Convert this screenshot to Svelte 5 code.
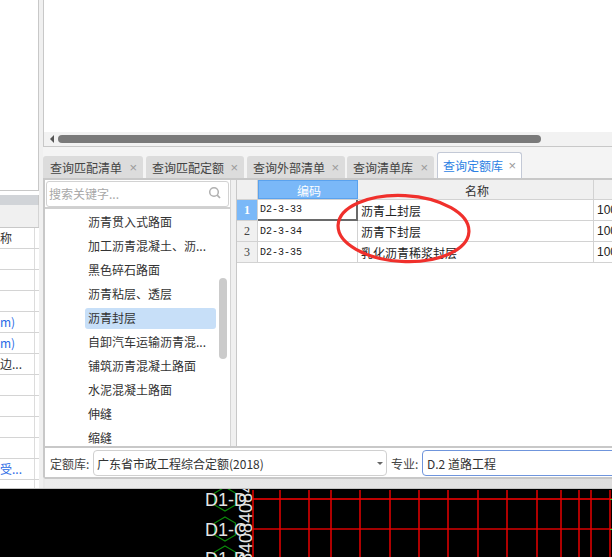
<script>
  const tabs = [
    { label: '查询匹配清单', w: 100, ml: 0 },
    { label: '查询匹配定额', w: 98, ml: 3 },
    { label: '查询外部清单', w: 98, ml: 3 },
    { label: '查询清单库', w: 87, ml: 2 },
    { label: '查询定额库', w: 85, ml: 3, active: true }
  ];
  const tree = ['沥青贯入式路面', '加工沥青混凝土、沥...', '黑色碎石路面', '沥青粘层、透层', '沥青封层', '自卸汽车运输沥青混...', '铺筑沥青混凝土路面', '水泥混凝土路面', '伸缝', '缩缝'];
  const rows = [
    { n: 1, code: 'D2-3-33', name: '沥青上封层', active: true },
    { n: 2, code: 'D2-3-34', name: '沥青下封层' },
    { n: 3, code: 'D2-3-35', name: '乳化沥青稀浆封层' }
  ];
  const leftRows = [
    { t: '' }, { t: '' }, { t: '' },
    { t: 'm)', c: 'blue' }, { t: 'm)', c: 'blue' }, { t: '边...', c: '' },
    { t: '' }, { t: '' }, { t: '' }, { t: '' },
    { t: '受...', c: 'blue' }, { t: '' }
  ];
  const vx = [253, 280, 309, 331, 360, 390, 419, 448, 478, 507, 537, 561, 579, 591, 610];
  const hex = (cx, cy, r) =>
    [0, 1, 2, 3, 4, 5].map((i) => {
      const a = (Math.PI / 3) * i - Math.PI / 2;
      return `${(cx + r * Math.cos(a)).toFixed(1)},${(cy + r * Math.sin(a)).toFixed(1)}`;
    }).join(' ');
</script>

<div class="app">
  <div class="top">
    <div class="left">
      <div class="left-blank"></div>
      <div class="left-band"></div>
      <div class="left-sub"></div>
      <div class="left-head"><span class="clip">称</span></div>
      {#each leftRows as r}
        <div class="left-row"><span class="clip {r.c}">{r.t}</span></div>
      {/each}
    </div>
    <div class="gutter"></div>
    <div class="right">
      <div class="white-top"></div>
      <div class="hscroll">
        <span class="arrow"></span>
        <span class="thumb"></span>
      </div>
      <div class="tabs">
        {#each tabs as t}
          <div class="tab" class:active={t.active} style="width:{t.w}px;margin-left:{t.ml}px">
            <span>{t.label}</span><span class="x">×</span>
          </div>
        {/each}
      </div>
      <div class="body">
        <div class="main">
          <div class="tree">
            <div class="search">
              <span>搜索关键字...</span>
              <svg width="14" height="14" viewBox="0 0 14 14"><circle cx="6" cy="6" r="4.3" fill="none" stroke="#b0b0b0" stroke-width="1.5"/><path d="M9.2 9.2L12 12" stroke="#b0b0b0" stroke-width="1.7"/></svg>
            </div>
            <div class="list">
              {#each tree as item}
                <div class="item"><span class="label" class:sel={item === '沥青封层'}>{item}</span></div>
              {/each}
              <div class="vthumb"></div>
            </div>
          </div>
          <div class="sep"></div>
          <div class="grid">
            <div class="g-row head">
              <div class="c-n"></div>
              <div class="c-code selhead">编码</div>
              <div class="c-name center">名称</div>
              <div class="c-q"></div>
            </div>
            {#each rows as r}
              <div class="g-row">
                <div class="c-n num" class:selnum={r.active}>{r.n}</div>
                <div class="c-code code" class:cur={r.active}>{r.code}</div>
                <div class="c-name">{r.name}</div>
                <div class="c-q">100</div>
              </div>
            {/each}
          </div>
        </div>
        <div class="footer">
          <span class="flabel">定额库:</span>
          <div class="select"><span>广东省市政工程综合定额(2018)</span><i class="caret"></i></div>
          <span class="flabel second">专业:</span>
          <div class="input">D.2 道路工程</div>
        </div>
        <div class="strip"></div>
      </div>
    </div>
  </div>

  <svg class="cad" width="612" height="69" viewBox="0 488 612 69">
    <rect x="0" y="488" width="612" height="69" fill="#000"/>
    <path d="M253 498H612" stroke="#f00" stroke-width="1.6"/>
    <path d="M253 528H612" stroke="#d80000" stroke-width="1.6"/>
    {#each vx as x}
      <path d="M{x} 489V557" stroke="#e80000" stroke-width="1.5"/>
    {/each}
    <polygon points={hex(225, 498, 12)} fill="none" stroke="#0b8a0b" stroke-width="1.2"/>
    <polygon points={hex(225, 528, 12)} fill="none" stroke="#0b8a0b" stroke-width="1.2"/>
    <polygon points={hex(225, 557, 12)} fill="none" stroke="#0b8a0b" stroke-width="1.2"/>
    <text x="205" y="505" class="cadt">D1-D</text>
    <text x="205" y="535" class="cadt">D1-C</text>
    <text x="205" y="564" class="cadt">D1-B</text>
    <text transform="translate(252 562) rotate(-90)" class="cadt">84084084</text>
    <path d="M611 498v1M611 528v1" stroke="#3c3" stroke-width="2"/>
  </svg>

  <svg class="ring" width="612" height="300" viewBox="0 0 612 300">
    <ellipse cx="403.5" cy="228.5" rx="65.5" ry="33" transform="rotate(3 403.5 228.5)" fill="none" stroke="#f0302c" stroke-width="3.2"/>
  </svg>
</div>

<style>
  :global(body) { margin: 0; }
  .app {
    position: relative;
    width: 612px;
    height: 557px;
    overflow: hidden;
    display: flex;
    flex-direction: column;
    font-family: "Noto Sans CJK SC", "Liberation Sans", sans-serif;
    font-size: 12px;
    color: #333;
    background: #f0f0f0;
  }
  .top { display: flex; height: 488px; flex: none; border-bottom: 1px solid #c4c4c4; }
  .left { width: 39px; flex: none; display: flex; flex-direction: column; background: #fff; overflow: hidden; }
  .left-blank { height: 190px; flex: none; border-right: 1px solid #c8c8c8; border-bottom: 1px solid #c8c8c8; box-sizing: content-box; width: 38px; }
  .left-band { margin-top: 4px; height: 10px; flex: none; background: #d1d4d8; border-right: 1px solid #c8c8c8; }
  .left-sub { height: 22px; flex: none; background: #f0f0f0; border-right: 1px solid #d4d4d4; }
  .left-head, .left-row { flex: none; height: 21px; box-sizing: border-box; border-top: 1px solid #d4d4d4; display: flex; justify-content: flex-start; padding-right: 3px; background: #fff; }
  .left-head { border-top-color: #c8c8c8; background: #fff; }
  .clip { width: 35px; height: 100%; box-sizing: border-box; border-right: 1px solid #dcdcdc; display: flex; align-items: center; white-space: nowrap; overflow: hidden; line-height: 1; }
  .blue { color: #2a6be6; }
  .gutter { width: 4px; flex: none; background: #f0f0f0; }
  .right { flex: 1; min-width: 0; display: flex; flex-direction: column; }
  .white-top { height: 132px; flex: none; background: #fff; border-left: 1px solid #c8c8c8; }
  .hscroll { height: 14px; flex: none; background: #f2f2f2; border-left: 1px solid #c8c8c8; border-bottom: 1px solid #c8c8c8; display: flex; align-items: center; padding-left: 6px; }
  .arrow { width: 0; height: 0; border-style: solid; border-width: 4px 4px 4px 0; border-color: transparent #555 transparent transparent; }
  .thumb { margin-left: 4px; width: 483px; height: 8px; border-radius: 4px; background: #7a7a7a; }
  .tabs { height: 31px; flex: none; display: flex; align-items: flex-end; background: #f4f4f4; }
  .tab { height: 22px; box-sizing: border-box; flex: none; background: #dcdcdc; border-radius: 3px 3px 0 0; padding: 0 6px 0 6px; display: flex; align-items: center; justify-content: space-between; color: #444; white-space: nowrap; }
  .tab:first-child { padding-left: 7px; }
  .tab.active { height: 26px; background: #fff; color: #2c7fe3; border: 1px solid #c3c9d6; border-bottom: none; padding: 0 5px 0 5px; }
  .x { color: #9a9a9a; font-size: 13px; font-family: "Liberation Sans", sans-serif; }
  .body { flex: 1; min-height: 0; display: flex; flex-direction: column; background: #fff; border-top: 2px solid #c8c8c8; }
  .main { height: 266px; flex: none; display: flex; }
  .tree { width: 188px; flex: none; display: flex; flex-direction: column; border-left: 2px solid #c8c8c8; border-right: 1px solid #d4d4d4; box-sizing: border-box; }
  .search { height: 26px; flex: none; box-sizing: border-box; margin: 1px 1px 0; border: 1px solid #d2d2d2; border-radius: 3px; display: flex; align-items: center; justify-content: space-between; padding: 0 6px 2px 2px; color: #a8a8a8; }
  .list { position: relative; flex: 1; min-height: 0; border-top: 2px solid #d0d0d0; padding-top: 1px; overflow: hidden; }
  .item { height: 24px; display: flex; align-items: center; padding-left: 40px; }
  .label { display: flex; align-items: center; box-sizing: border-box; width: 131px; height: 21px; padding: 0 0 2px 3px; border-radius: 3px; white-space: nowrap; }
  .label.sel { background: #c7dff8; }
  .vthumb { position: absolute; left: 174px; top: 69px; width: 8px; height: 81px; background: #cbcbcb; border-radius: 4px; }
  .sep { width: 5px; flex: none; background: #f0f0f0; border-right: 1px solid #c8c8c8; }
  .grid { flex: 1; min-width: 0; background: #fff; overflow: hidden; }
  .g-row { display: flex; height: 21px; box-sizing: border-box; border-bottom: 1px solid #d2d2d2; color: #222; }
  .g-row.head { height: 20px; background: #f0f0f0; border-bottom-color: #d2d2d2; color: #333; }
  .g-row > div { flex: none; box-sizing: border-box; border-right: 1px solid #d2d2d2; display: flex; align-items: center; white-space: nowrap; }
  .g-row.head > div { padding-top: 1px; }
  .g-row > .c-n { width: 21px; justify-content: center; background: #f0f0f0; }
  .num { font-family: "Liberation Serif", serif; color: #444; }
  .g-row > .selnum { background: #7ab8f8; color: #fff; font-weight: bold; }
  .g-row > .c-code { width: 100px; padding-left: 2px; }
  .code { font-family: "Liberation Mono", monospace; font-size: 10px; }
  .g-row > .selhead { justify-content: center; background: #7ab8f8; color: #fff; border: 1px solid #5aa2ee; }
  .g-row > .cur { border-right: 2px solid #6a6a6a; border-bottom: 2px solid #6a6a6a; height: 21px; }
  .g-row > .c-name { width: 236px; padding-left: 3px; }
  .g-row > .center { justify-content: center; }
  .g-row > .c-q { width: 100px; padding-left: 3px; font-family: "Liberation Sans", sans-serif; border-right: none; }
  .footer { height: 31px; flex: none; box-sizing: border-box; display: flex; align-items: center; padding: 2px 0 1px 5px; border-top: 2px solid #c8c8c8; border-left: 2px solid #c8c8c8; background: #fff; }
  .flabel { flex: none; width: 40px; color: #444; white-space: nowrap; }
  .second { margin-left: 4px; width: 30px; }
  .select { width: 294px; flex: none; height: 26px; box-sizing: border-box; margin-left: 3px; border: 1px solid #d0d0d0; border-radius: 4px; display: flex; align-items: center; justify-content: space-between; padding: 0 3px; color: #333; }
  .caret { width: 0; height: 0; border-style: solid; border-width: 3px 3px 0; border-color: #666 transparent transparent; }
  .input { width: 200px; flex: none; height: 26px; box-sizing: border-box; margin-left: 1px; border: 1px solid #6f95dc; border-radius: 4px 0 0 4px; display: flex; align-items: center; padding-left: 4px; color: #333; white-space: nowrap; }
  .strip { flex: 1; border-top: 2px solid #c8c8c8; background: linear-gradient(90deg, #ececec, #dedede); border-left: 2px solid #e8e8e8; }
  .cad { display: block; flex: none; }
  .cadt { font-family: "Liberation Sans", sans-serif; font-size: 18px; fill: #e4e4e4; }
  .ring { position: absolute; left: 0; top: 0; pointer-events: none; }
</style>
